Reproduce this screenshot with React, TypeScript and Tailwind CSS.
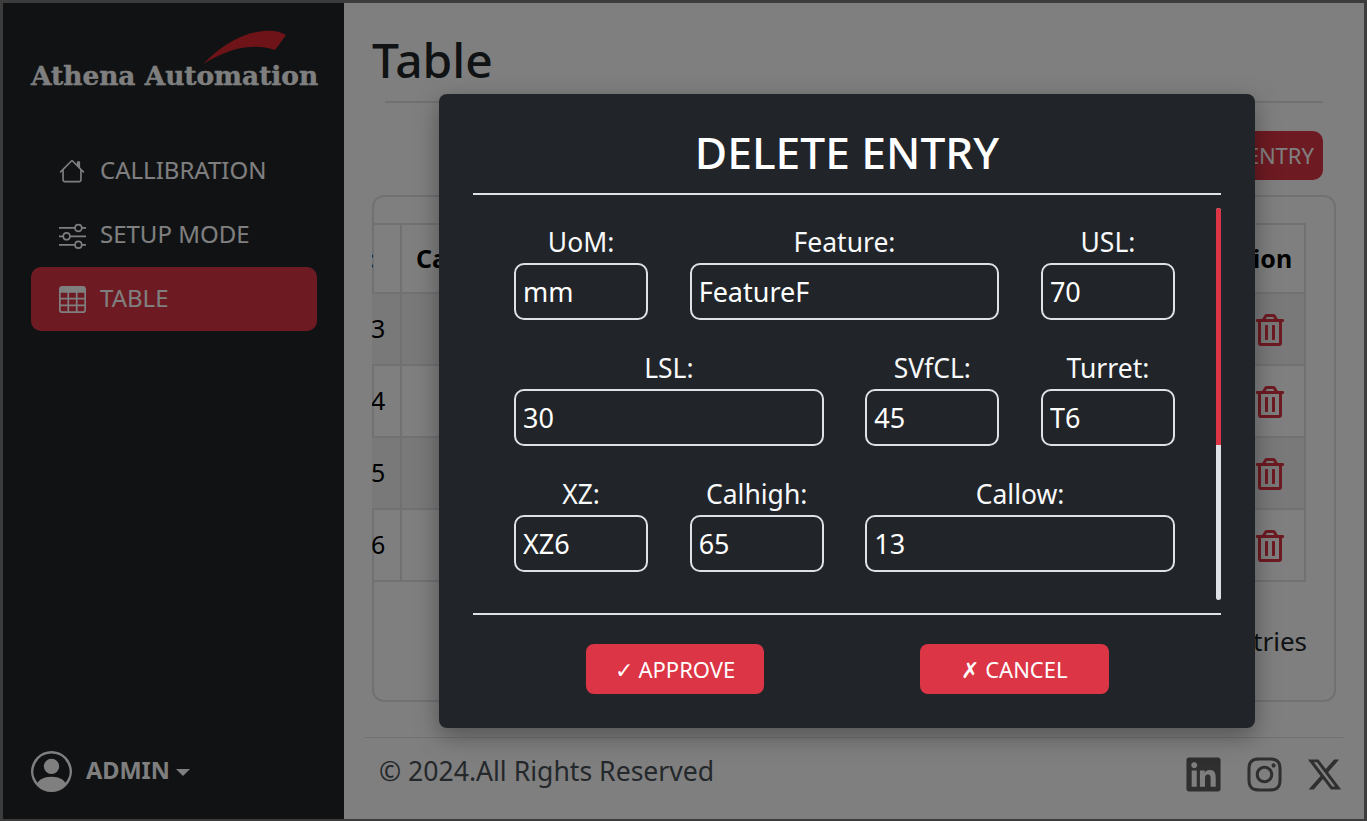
import React from 'react';
import { BsHouse, BsSliders, BsTable, BsPersonCircle } from 'react-icons/bs';
import { FaLinkedin, FaInstagram, FaRegTrashAlt } from 'react-icons/fa';
import { FaXTwitter } from 'react-icons/fa6';

const rows = ['3', '4', '5', '6'];

const Field = ({ label, value, span }: { label: string; value: string; span?: boolean }) => (
  <div className={`flex flex-col items-center ${span ? 'col-span-2' : ''}`}>
    <label className="text-[26.5px] leading-[30px] mb-[6px] text-[#f8f9fa]">{label}</label>
    <input
      readOnly
      value={value}
      className="w-full h-[57px] px-[7px] text-[27px] text-white bg-transparent border-2 border-[#dee2e6] rounded-[10px] outline-none"
    />
  </div>
);

const NavItem = ({ icon, label, active }: { icon: React.ReactNode; label: string; active?: boolean }) => (
  <div className={`flex items-center h-[64px] pl-[28px] rounded-[10px] text-[24px] text-white ${active ? 'bg-[#dc3545]' : ''}`}>
    <span className="w-[41px] flex items-center">{icon}</span>
    <span className="pb-[2px]">{label}</span>
  </div>
);

export default function App() {
  return (
    <div className="relative w-[1367px] h-[821px] overflow-hidden flex border-[3px] border-b-2 border-[#3c3c3c] bg-[#808080] font-['Noto_Sans',sans-serif]">
      {/* sidebar */}
      <aside className="w-[341px] shrink-0 bg-[#212529] flex flex-col pl-[28px] pr-[27px]">
        <div className="relative h-[136px]">
          <svg className="absolute left-[172px] top-[27px]" width="84" height="35" viewBox="0 0 84 35">
            <path d="M0 34C22 12 42 3 60 1C69 0 77 1 83 5L72 20C52 13 27 17 0 34Z" fill="#dc2830" />
          </svg>
          <div className="absolute left-0 top-[55px] w-[286px] whitespace-nowrap text-[26.4px] leading-[36px] font-bold text-white font-['DejaVu_Serif',serif] [-webkit-text-stroke:0.4px_white]">
            Athena Automation
          </div>
        </div>
        <nav className="flex flex-col">
          <NavItem icon={<BsHouse size={26} />} label="CALLIBRATION" />
          <NavItem icon={<BsSliders size={27} />} label="SETUP MODE" />
          <NavItem icon={<BsTable size={27} />} label="TABLE" active />
        </nav>
        <div className="mt-auto mb-[27px] flex items-center text-white">
          <BsPersonCircle size={41} />
          <span className="ml-[14px] pb-[2px] text-[23.5px] font-bold">ADMIN</span>
          <span className="ml-[6px] mt-[2px] border-x-[7px] border-x-transparent border-t-[7px] border-t-white" />
        </div>
      </aside>

      {/* main */}
      <main className="flex-1 flex flex-col min-w-0 bg-white">
        <h1 className="h-[98px] pl-[28px] pt-[29px] text-[48px] leading-[56px] font-medium text-[#212529]">Table</h1>
        <div className="mx-[41px] border-t-2 border-[#dee2e6]" />
        <div className="flex justify-end mx-[41px] mt-[28px]">
          <button className="h-[49px] px-[9px] rounded-[10px] bg-[#dc3545] text-white text-[22px]">ADD NEW ENTRY</button>
        </div>
        <section className="mx-[28px] mt-[15px] h-[507px] border-2 border-[#dee2e6] rounded-[12px] pt-[26px] flex flex-col">
          <div className="h-[373px] -mx-[2px] overflow-hidden">
            <table className="-ml-[16px] w-[950px] table-fixed border-collapse text-black text-[25px]">
              <thead>
                <tr className="h-[69px]">
                  <th className="w-[44px] border-2 border-[#dee2e6] text-left font-bold">
                    <span className="block -ml-[19px]">ID:</span>
                  </th>
                  <th className="border-2 border-[#dee2e6] text-left pl-[14px] font-bold">Calhigh</th>
                  <th className="w-[100px] border-2 border-[#dee2e6] text-center pr-[6px] font-bold">Action</th>
                </tr>
              </thead>
              <tbody>
                {rows.map((n, i) => (
                  <tr key={n} className={`h-[72px] ${i % 2 === 0 ? 'bg-[#f2f2f2]' : ''}`}>
                    <td className="border-2 border-[#dee2e6] pl-[13px] font-normal">{n}</td>
                    <td className="border-2 border-[#dee2e6]" />
                    <td className="border-2 border-[#dee2e6]">
                      <span className="flex justify-center pl-[30px] pt-[2px] text-[#dc3545]">
                        <FaRegTrashAlt size={32} />
                      </span>
                    </td>
                  </tr>
                ))}
              </tbody>
            </table>
          </div>
          <div className="mt-[26px] pr-[27px] text-right text-[26px] text-[#212529]">Showing 3 to 6 of 6 entries</div>
        </section>
        <footer className="mx-[21px] mt-[35px] flex-1 border-t border-[#dee2e6] flex items-center justify-between pl-[14px] pb-[13px] text-[26.6px] text-[#495057]">
          <span>© 2024.All Rights Reserved</span>
          <span className="flex items-center gap-[22px] mt-[4px] text-[#5f5f5f]">
            <FaLinkedin size={39} />
            <FaInstagram size={39} />
            <FaXTwitter size={37} />
          </span>
        </footer>
      </main>

      {/* dim layer */}
      <div className="absolute inset-0 bg-black/50" />

      {/* delete modal */}
      <div className="absolute left-[436px] top-[91px] w-[816px] h-[634px] bg-[#212529] rounded-[8px] shadow-[0_8px_24px_rgba(0,0,0,0.35)] text-white flex flex-col px-[34px]">
        <h2 className="h-[101px] flex items-center justify-center pt-[18px] text-[44.3px] font-medium border-b-2 border-[#dee2e6]">DELETE ENTRY</h2>
        <div className="relative mt-[13px] h-[392px] pl-[41px] pr-[46px]">
          <div className="grid grid-cols-4 gap-x-[41.5px] gap-y-[33px] pt-[19px]">
            <Field label="UoM:" value="mm" />
            <Field label="Feature:" value="FeatureF" span />
            <Field label="USL:" value="70" />
            <Field label="LSL:" value="30" span />
            <Field label="SVfCL:" value="45" />
            <Field label="Turret:" value="T6" />
            <Field label="XZ:" value="XZ6" />
            <Field label="Calhigh:" value="65" />
            <Field label="Callow:" value="13" span />
          </div>
          <div className="absolute right-0 top-0 w-[5px] h-full rounded-full bg-[#dee2e6] overflow-hidden">
            <div className="h-[237px] bg-[#dc3545]" />
          </div>
        </div>
        <div className="mt-[13px] border-t-2 border-[#dee2e6] flex pt-[29px]">
          <button className="ml-[113px] w-[178px] h-[50px] rounded-[8px] bg-[#dc3545] text-white text-[22px]">✓ APPROVE</button>
          <button className="ml-[156px] w-[189px] h-[50px] rounded-[8px] bg-[#dc3545] text-white text-[22px]">✗ CANCEL</button>
        </div>
      </div>
    </div>
  );
}
